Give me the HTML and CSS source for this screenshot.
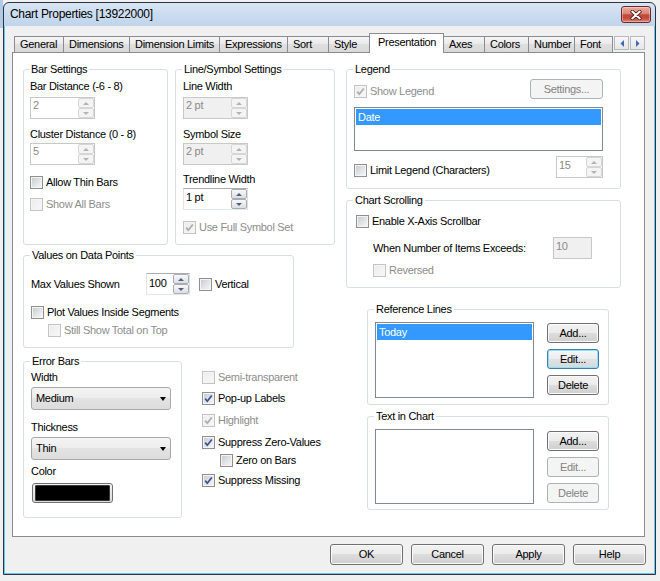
FILE: index.html
```html
<!DOCTYPE html>
<html>
<head>
<meta charset="utf-8">
<title>Chart Properties</title>
<link rel="stylesheet" href="styles.css">
</head>
<body>
<div class="window">
  <div class="titlebar">
    <span class="caption">Chart Properties [13922000]</span>
    <div class="close">
      <svg width="12" height="10" viewBox="0 0 12 10"><path d="M2.2 1.6 L9.8 8.4 M9.8 1.6 L2.2 8.4" stroke="#4a1d17" stroke-width="3.6" stroke-linecap="round" fill="none"/><path d="M2.2 1.6 L9.8 8.4 M9.8 1.6 L2.2 8.4" stroke="#ffffff" stroke-width="2" stroke-linecap="round" fill="none"/></svg>
    </div>
  </div>
  <div class="client">
    <div class="tabstrip">
      <div class="tab t-general">General</div>
      <div class="tab t-dims">Dimensions</div>
      <div class="tab t-dimlim">Dimension Limits</div>
      <div class="tab t-expr">Expressions</div>
      <div class="tab t-sort">Sort</div>
      <div class="tab t-style">Style</div>
      <div class="tab active t-pres">Presentation</div>
      <div class="tab t-axes">Axes</div>
      <div class="tab t-colors">Colors</div>
      <div class="tab t-number">Number</div>
      <div class="tab t-font">Font</div>
      <div class="tabarrows">
        <span class="tabarrow"><svg width="4" height="7" viewBox="0 0 4 7"><path d="M4 0 L0.5 3.5 L4 7Z" fill="#4066b8"/></svg></span>
        <span class="tabarrow"><svg width="4" height="7" viewBox="0 0 4 7"><path d="M0 0 L3.5 3.5 L0 7Z" fill="#4066b8"/></svg></span>
      </div>
    </div>

    <div class="panel">
      <div class="col-left">
        <div class="row-top">
          <div class="group g-bar">
            <div class="title">Bar Settings</div>
            <div class="lbl mt4">Bar Distance (-6 - 8)</div>
            <div class="spin dis w65 mt4"><span class="v">2</span><span class="sb"><i class="up"></i><i class="dn"></i></span></div>
            <div class="lbl mt9">Cluster Distance (0 - 8)</div>
            <div class="spin dis w65 mt2"><span class="v">5</span><span class="sb"><i class="up"></i><i class="dn"></i></span></div>
            <div class="cbrow mt11"><span class="cb"></span>Allow Thin Bars</div>
            <div class="cbrow dis mt9"><span class="cb"></span>Show All Bars</div>
          </div>
          <div class="group g-line">
            <div class="title">Line/Symbol Settings</div>
            <div class="lbl mt4">Line Width</div>
            <div class="spin dis gray w65 mt4"><span class="v">2 pt</span><span class="sb"><i class="up"></i><i class="dn"></i></span></div>
            <div class="lbl mt9">Symbol Size</div>
            <div class="spin dis gray w65 mt2"><span class="v">2 pt</span><span class="sb"><i class="up"></i><i class="dn"></i></span></div>
            <div class="lbl mt8">Trendline Width</div>
            <div class="spin w65 mt2"><span class="v p2">1 pt</span><span class="sb"><i class="up"></i><i class="dn"></i></span></div>
            <div class="cbrow dis mt11"><span class="cb on"><svg width="11" height="11" viewBox="0 0 11 11"><path d="M2.2 5.6 L4.3 8.2 L8.8 2.4" fill="none" stroke-width="1.7"/></svg></span>Use Full Symbol Set</div>
          </div>
        </div>

        <div class="group g-values">
          <div class="title">Values on Data Points</div>
          <div class="maxrow mt11">
            <span class="maxlbl">Max Values Shown</span>
            <div class="spin w44"><span class="v p3">100</span><span class="sb"><i class="up"></i><i class="dn"></i></span></div>
            <div class="cbrow ml9"><span class="cb"></span>Vertical</div>
          </div>
          <div class="cbrow mt11"><span class="cb"></span>Plot Values Inside Segments</div>
          <div class="cbrow dis mt5 ml17"><span class="cb"></span>Still Show Total on Top</div>
        </div>

        <div class="row-error">
          <div class="group g-error">
            <div class="title">Error Bars</div>
            <div class="lbl mt3">Width</div>
            <div class="combo mt3"><span>Medium</span><i class="caret"></i></div>
            <div class="lbl mt11">Thickness</div>
            <div class="combo mt3"><span>Thin</span><i class="caret"></i></div>
            <div class="lbl mt5">Color</div>
            <div class="colorbtn mt5"><span class="swatch"></span></div>
          </div>
          <div class="checks">
            <div class="cbrow dis"><span class="cb"></span>Semi-transparent</div>
            <div class="cbrow mt8"><span class="cb on"><svg width="11" height="11" viewBox="0 0 11 11"><path d="M2.2 5.6 L4.3 8.2 L8.8 2.4" fill="none" stroke-width="1.7"/></svg></span>Pop-up Labels</div>
            <div class="cbrow dis mt9"><span class="cb on"><svg width="11" height="11" viewBox="0 0 11 11"><path d="M2.2 5.6 L4.3 8.2 L8.8 2.4" fill="none" stroke-width="1.7"/></svg></span>Highlight</div>
            <div class="cbrow mt9"><span class="cb on"><svg width="11" height="11" viewBox="0 0 11 11"><path d="M2.2 5.6 L4.3 8.2 L8.8 2.4" fill="none" stroke-width="1.7"/></svg></span>Suppress Zero-Values</div>
            <div class="cbrow mt5 ml18"><span class="cb"></span>Zero on Bars</div>
            <div class="cbrow mt7"><span class="cb on"><svg width="11" height="11" viewBox="0 0 11 11"><path d="M2.2 5.6 L4.3 8.2 L8.8 2.4" fill="none" stroke-width="1.7"/></svg></span>Suppress Missing</div>
          </div>
        </div>
      </div>

      <div class="col-right">
        <div class="group g-legend">
          <div class="title">Legend</div>
          <div class="legtop mt3">
            <div class="cbrow dis mt6"><span class="cb on"><svg width="11" height="11" viewBox="0 0 11 11"><path d="M2.2 5.6 L4.3 8.2 L8.8 2.4" fill="none" stroke-width="1.7"/></svg></span>Show Legend</div>
            <button class="btn dis wsettings">Settings...</button>
          </div>
          <div class="list leglist mt8"><div class="sel">Date</div></div>
          <div class="legbot mt5">
            <div class="cbrow mt8"><span class="cb"></span>Limit Legend (Characters)</div>
            <div class="spin dis w47"><span class="v p2">15</span><span class="sb"><i class="up"></i><i class="dn"></i></span></div>
          </div>
        </div>

        <div class="group g-scroll">
          <div class="title">Chart Scrolling</div>
          <div class="cbrow mt8 ml2"><span class="cb"></span>Enable X-Axis Scrollbar</div>
          <div class="itemsrow mt9">
            <span class="itemslbl">When Number of Items Exceeds:</span>
            <div class="edit dis gray w39"><span class="v p2">10</span></div>
          </div>
          <div class="cbrow dis mt5 ml19"><span class="cb"></span>Reversed</div>
        </div>

        <div class="group g-ref">
          <div class="title">Reference Lines</div>
          <div class="listrow mt6">
            <div class="list reflist"><div class="sel">Today</div></div>
            <div class="btncol mt1">
              <button class="btn sm">Add...</button>
              <button class="btn sm focus">Edit...</button>
              <button class="btn sm">Delete</button>
            </div>
          </div>
        </div>

        <div class="group g-text">
          <div class="title">Text in Chart</div>
          <div class="listrow mt6">
            <div class="list textlist"></div>
            <div class="btncol mt2">
              <button class="btn sm">Add...</button>
              <button class="btn sm dis">Edit...</button>
              <button class="btn sm dis">Delete</button>
            </div>
          </div>
        </div>
      </div>
    </div>

    <div class="buttons">
      <button class="btn big">OK</button>
      <button class="btn big">Cancel</button>
      <button class="btn big">Apply</button>
      <button class="btn big">Help</button>
    </div>
  </div>
</div>
</body>
</html>
```

FILE: styles.css
```css
* { box-sizing: border-box; }
html, body { margin: 0; padding: 0; }
body {
  width: 660px;
  height: 581px;
  overflow: hidden;
  background: linear-gradient(#b3cae5, #b3cae5) 0 0 / 3px 28px no-repeat, #f0f0f0;
  font-family: "Liberation Sans", Arial, sans-serif;
  font-size: 11px;
  line-height: 13px;
  letter-spacing: -0.3px;
  color: #000;
}

/* window frame */
.window {
  margin: 2px 0 0 3px;
  width: 653px;
  height: 573px;
  border: 1px solid #2b3542;
  border-radius: 6px 6px 0 0;
  background: linear-gradient(#d7e5f5, #bed3ea 24px);
  display: flex;
  flex-direction: column;
  overflow: hidden;
}
.titlebar {
  height: 23px;
  flex: none;
  display: flex;
  align-items: flex-start;
  padding-left: 6px;
}
.caption {
  font-size: 12px;
  line-height: 15px;
  margin-top: 4px;
}
.close {
  margin-left: auto;
  margin-top: 3px;
  margin-right: 4px;
  width: 30px;
  height: 17px;
  border: 1px solid #6b2a22;
  border-radius: 3px;
  background: linear-gradient(#e9ada1 0%, #d98676 45%, #c3463a 52%, #c84c3d 75%, #de8476 100%);
  box-shadow: inset 0 0 0 1px rgba(255, 255, 255, 0.35);
  display: flex;
  align-items: center;
  justify-content: center;
}
.close svg { display: block; }

.client {
  flex: 1;
  background: #f0f0f0;
  border: 1px solid #63c6ef;
  border-top: none;
  padding: 7px 8px 0 7px;
  display: flex;
  flex-direction: column;
}

/* tabs */
.tabstrip {
  height: 20px;
  flex: none;
  display: flex;
  align-items: flex-end;
  margin-bottom: -1px;
  padding-left: 2px;
  position: relative;
  z-index: 1;
}
.tab {
  height: 17px;
  border: 1px solid #898c95;
  margin-left: -1px;
  padding: 1px 0 0 5px;
  background: linear-gradient(#f5f5f5, #e9e9e9 50%, #dfdfdf 50%, #d9d9d9);
  white-space: nowrap;
  overflow: hidden;
}
.tab:first-child { margin-left: 0; }
.tab.active {
  height: 20px;
  border-bottom: none;
  background: #fff;
  padding: 2px 0 0 8px;
  position: relative;
  z-index: 2;
}
.t-general { width: 50px; }
.t-dims { width: 67px; }
.t-dimlim { width: 91px; }
.t-expr { width: 69px; }
.t-sort { width: 42px; }
.t-style { width: 42px; }
.t-pres { width: 75px; }
.t-axes { width: 42px; }
.t-colors { width: 45px; }
.t-number { width: 47px; }
.t-font { width: 39px; }
.tabarrows {
  align-self: flex-start;
  margin-top: 3px;
  margin-left: 1px;
  display: flex;
  gap: 1px;
}
.tabarrow {
  width: 15px;
  height: 14px;
  border: 1px solid #b6b9be;
  background: linear-gradient(#f7f7f7, #e6e6e6);
  display: flex;
  align-items: center;
  justify-content: center;
}
.tabarrow svg { display: block; }

/* panel */
.panel {
  height: 485px;
  flex: none;
  margin-right: 1px;
  border: 1px solid #898c95;
  background: #fff;
  display: flex;
  align-items: flex-start;
  padding: 16px 0 0 10px;
}
.col-left { width: 312px; display: flex; flex-direction: column; }
.col-right { width: 275px; margin-left: 11px; display: flex; flex-direction: column; }
.row-top { display: flex; gap: 7px; }
.row-error { display: flex; align-items: flex-start; margin-top: 13px; }

/* group boxes */
.group {
  border: 1px solid #d5dfe5;
  border-radius: 3px;
  display: flex;
  flex-direction: column;
  align-items: flex-start;
  padding-left: 7px;
}
.title {
  margin: -7px 0 0 -1px;
  padding: 0 2px;
  background: #fff;
  white-space: nowrap;
}
.g-bar { width: 145px; height: 176px; padding-left: 6px; }
.g-line { width: 160px; height: 176px; }
.g-values { width: 271px; height: 93px; margin-top: 10px; }
.g-error { width: 159px; height: 157px; }
.checks { margin-left: 20px; margin-top: 10px; display: flex; flex-direction: column; }
.g-legend { height: 120px; padding-right: 17px; }
.g-scroll { height: 88px; margin-top: 11px; }
.g-ref { height: 96px; margin: 21px 12px 0 21px; }
.g-text { height: 94px; margin: 11px 12px 0 21px; }

.lbl { white-space: nowrap; }

/* spacing helpers */
.mt1 { margin-top: 1px; }
.mt2 { margin-top: 2px; }
.mt3 { margin-top: 3px; }
.mt4 { margin-top: 4px; }
.mt5 { margin-top: 5px; }
.mt6 { margin-top: 6px; }
.mt7 { margin-top: 7px; }
.mt8 { margin-top: 8px; }
.mt9 { margin-top: 9px; }
.mt11 { margin-top: 11px; }
.ml2 { margin-left: 2px; }
.ml9 { margin-left: 9px; }
.ml17 { margin-left: 17px; }
.ml18 { margin-left: 18px; }
.ml19 { margin-left: 19px; }

/* checkboxes */
.cbrow {
  display: flex;
  align-items: center;
  height: 13px;
  white-space: nowrap;
}
.cb {
  width: 13px;
  height: 13px;
  flex: none;
  margin-right: 3px;
  border: 1px solid #8e8f8f;
  background: linear-gradient(135deg, #c3c7cc 0%, #e3e4e6 55%, #f8f8f8 100%);
  box-shadow: inset 0 0 0 1px #f4f4f4;
  display: flex;
  align-items: center;
  justify-content: center;
}
.cb svg { display: block; }
.cb path { stroke: #3a5294; }
.cbrow.dis { color: #8d8d8d; }
.cbrow.dis .cb {
  border-color: #c4c4c4;
  background: linear-gradient(135deg, #ebebeb, #f8f8f8);
}
.cbrow.dis .cb path { stroke: #ababab; }

/* spin / edit boxes */
.spin, .edit {
  display: flex;
  height: 22px;
  border: 1px solid;
  border-color: #abadb3 #dbdfe6 #e3e9ef #e2e3ea;
  background: #fff;
}
.spin .v, .edit .v { flex: 1; padding: 1px 0 0 2px; white-space: nowrap; }
.v.p2 { padding-top: 2px; }
.v.p3 { padding-top: 3px; }
.spin .sb { width: 16px; flex: none; display: flex; flex-direction: column; }
.spin .sb i {
  flex: 1;
  border: 1px solid #a9adb3;
  border-radius: 2px;
  background: linear-gradient(#f8f8f8, #dedede);
  display: flex;
  align-items: center;
  justify-content: center;
}
.spin .up::before {
  content: "";
  border-left: 3px solid transparent;
  border-right: 3px solid transparent;
  border-bottom: 3px solid #4c5f88;
}
.spin .dn::before {
  content: "";
  border-left: 3px solid transparent;
  border-right: 3px solid transparent;
  border-top: 3px solid #4c5f88;
}
.spin.dis, .edit.dis { border-color: #c8c8c8; color: #8a8a8a; }
.spin.dis .sb i { border-color: #d6d6d6; background: #f4f4f4; }
.spin.dis .up::before { border-bottom-color: #b2b2b2; }
.spin.dis .dn::before { border-top-color: #b2b2b2; }
.spin.gray, .edit.gray { background: #f0f0f0; }
.w65 { width: 65px; }
.w44 { width: 44px; }
.w47 { width: 47px; }
.w39 { width: 39px; }

.maxrow { display: flex; align-items: center; height: 22px; }
.maxlbl { width: 115px; white-space: nowrap; }

/* combos */
.combo {
  width: 140px;
  height: 23px;
  border: 1px solid #a9a9a9;
  border-radius: 3px;
  background: linear-gradient(#f4f4f4, #ececec 50%, #e3e3e3 50%, #dcdcdc);
  display: flex;
  align-items: center;
  padding: 0 4px 0 4px;
}
.combo span { flex: 1; }
.caret {
  width: 0;
  height: 0;
  border-left: 3.5px solid transparent;
  border-right: 3.5px solid transparent;
  border-top: 4px solid #000;
  margin-right: 0;
}
.colorbtn {
  width: 81px;
  height: 20px;
  margin-left: 1px;
  border: 1px solid #707070;
  border-radius: 3px;
  padding: 1px 2px;
  background: linear-gradient(#f2f2f2, #dcdcdc);
  display: flex;
}
.swatch {
  flex: 1;
  background: #000;
  border: 1px solid #3a3a3a;
  border-radius: 1px;
}

/* legend */
.legtop, .legbot {
  align-self: stretch;
  display: flex;
  justify-content: space-between;
  align-items: flex-start;
}
.list {
  border: 1px solid #828790;
  background: #fff;
  padding: 1px;
}
.sel {
  height: 16px;
  line-height: 16px;
  padding-left: 2px;
  background: #3399ff;
  color: #fff;
}
.leglist { align-self: stretch; height: 44px; }
.reflist { width: 159px; height: 76px; }
.textlist { width: 159px; height: 75px; }

.itemsrow { display: flex; align-items: center; height: 22px; margin-left: 19px; }
.itemslbl { width: 180px; white-space: nowrap; }

.listrow { display: flex; align-items: flex-start; }
.btncol { display: flex; flex-direction: column; gap: 6px; margin-left: 13px; }

/* buttons */
.btn {
  font: inherit;
  letter-spacing: inherit;
  color: #000;
  margin: 0;
  padding: 0;
  height: 20px;
  border: 1px solid #707070;
  border-radius: 3px;
  background: linear-gradient(#f2f2f2, #ebebeb 50%, #dddddd 50%, #cfcfcf);
  box-shadow: inset 0 0 0 1px #fbfbfb;
  display: flex;
  align-items: center;
  justify-content: center;
  white-space: nowrap;
}
.btn.sm { width: 52px; }
.btn.big { width: 73px; height: 21px; }
.btn.wsettings { width: 73px; }
.btn.dis {
  border-color: #adb2b5;
  background: #f4f4f4;
  box-shadow: none;
  color: #838383;
}
.btn.focus {
  border-color: #3c7fb1;
  background: linear-gradient(#f4f7f9, #ececec 50%, #e0e2e4 50%, #d6d9db);
  box-shadow: inset 0 0 0 1px #8fe0fb;
}
.buttons {
  display: flex;
  justify-content: flex-end;
  gap: 8px;
  margin-top: 7px;
}
```
